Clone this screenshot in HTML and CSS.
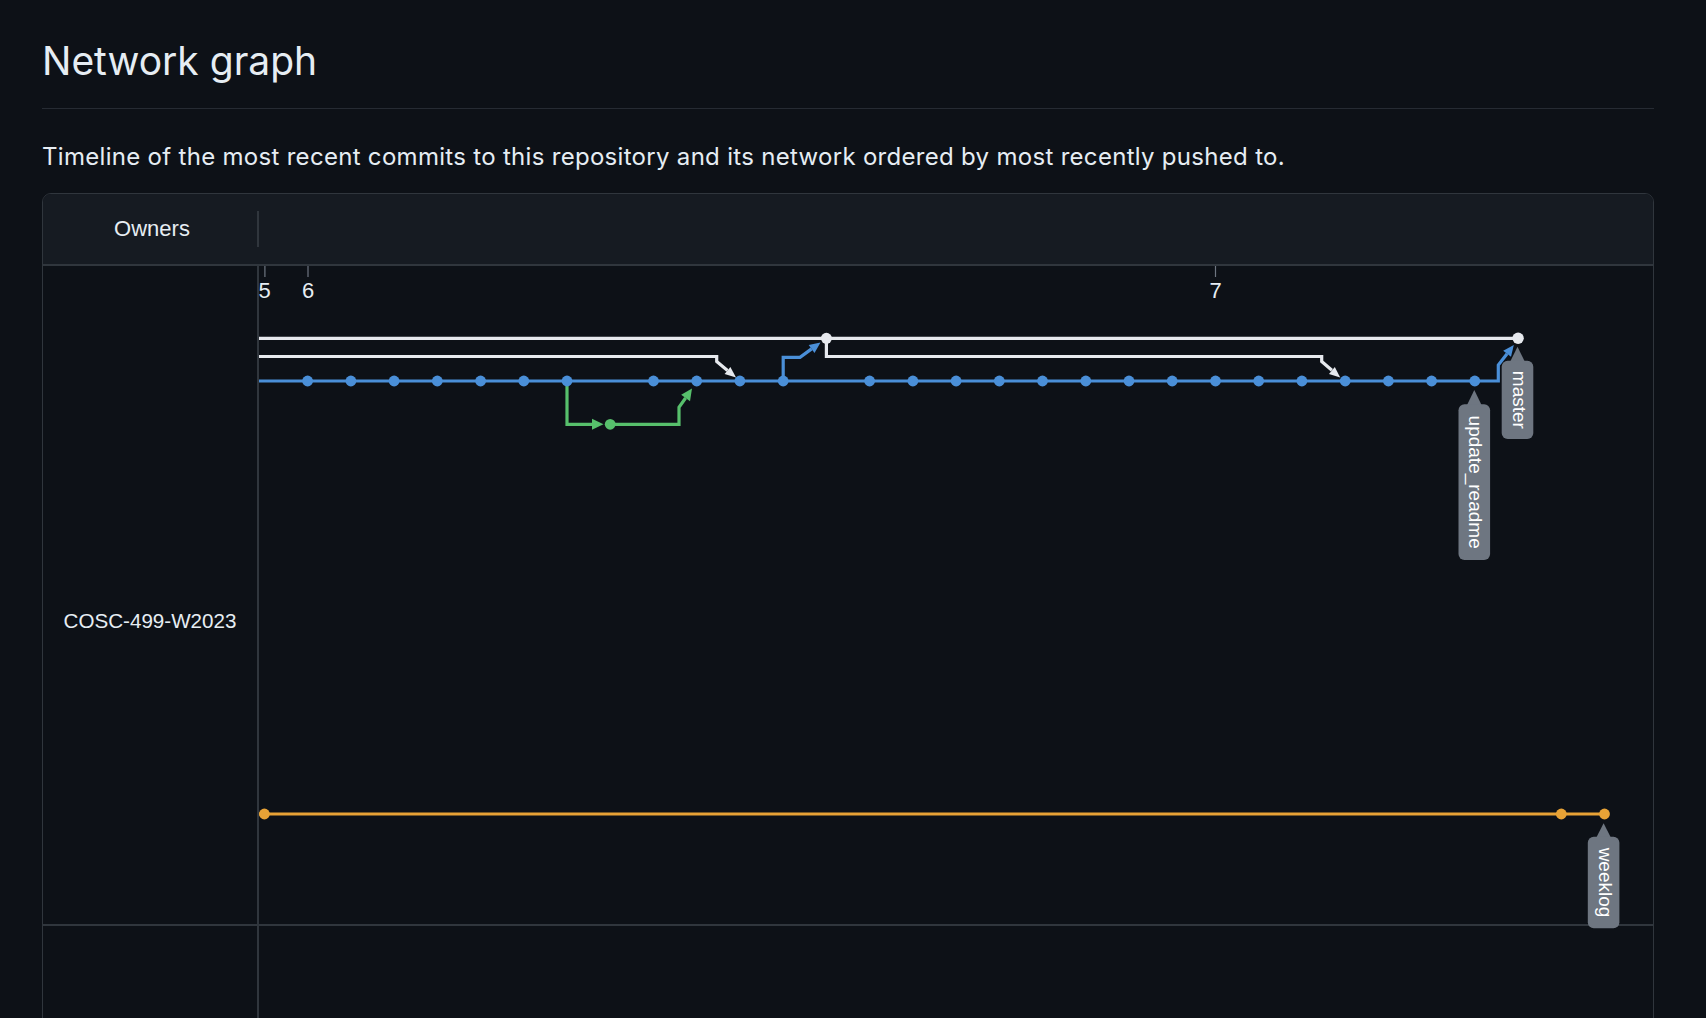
FILE: index.html
```html
<!DOCTYPE html>
<html lang="en">
<head>
<meta charset="utf-8">
<title>Network graph</title>
<link rel="stylesheet" href="styles.css">
</head>
<body>
<main class="page">
  <div class="subhead">
    <h2 class="subhead-heading">Network graph</h2>
  </div>
  <p class="lead">Timeline of the most recent commits to this repository and its network ordered by most recently pushed to.</p>
  <section class="network">
    <div class="net-head">
      <div class="owners-title">Owners</div>
      <div class="head-sep"></div>
      <div class="head-rest"></div>
    </div>
    <div class="net-row">
      <div class="owner-cell"><span class="owner-name">COSC-499-W2023</span></div>
      <div class="graph-cell">
        <svg class="graph" width="1394" height="658" viewBox="259 266 1394 658" xmlns="http://www.w3.org/2000/svg">
          <!-- date ticks -->
          <g class="ticks">
            <line x1="264.9" y1="266" x2="264.9" y2="277"/>
            <line x1="308" y1="266" x2="308" y2="277"/>
            <line x1="1215.5" y1="266" x2="1215.5" y2="277"/>
          </g>
          <g class="dates">
            <text x="264.5" y="298.3">5</text>
            <text x="308" y="298.3">6</text>
            <text x="1215.5" y="298.3">7</text>
          </g>

          <!-- white (master) -->
          <g class="c-white">
            <path class="ln" d="M259 338.3 H1518.1"/>
            <path class="ln" d="M259 356.5 H716.7 V361.5 L727.5 370.5"/>
            <polygon points="736,377.5 724.6,374 730.4,367"/>
            <path class="ln" d="M826.4 338.3 V356.5 H1321.7 V361.5 L1331.9 370.3"/>
            <polygon points="1340.2,377.5 1329,373.9 1334.8,366.9"/>
          </g>

          <!-- blue -->
          <g class="c-blue">
            <path class="ln" d="M259 381 H1498.3 V365 L1507.1 353.7"/>
            <polygon points="1513.8,345 1511,356.7 1503.2,350.7"/>
            <path class="ln" d="M783.2 381 V357.3 H800 L811.6 348.9"/>
            <polygon points="820.5,342.5 814.5,353 808.7,345"/>
          </g>

          <!-- green -->
          <g class="c-green">
            <path class="ln" d="M567 381 V424.3 H593"/>
            <polygon points="603.5,424.3 592,418.8 592,429.8"/>
            <path class="ln" d="M610.2 424.3 H679 V407.3 L685.6 398"/>
            <polygon points="692,388.5 690,401.2 681.2,394.8"/>
            <circle cx="610.2" cy="424.3" r="5.4"/>
          </g>

          <!-- orange -->
          <g class="c-orange">
            <path class="ln" d="M259 814 H1604.5"/>
            <circle cx="264.4" cy="814" r="5.4"/>
            <circle cx="1561.3" cy="814" r="5.4"/>
            <circle cx="1604.5" cy="814" r="5.4"/>
          </g>

          <!-- blue commits -->
          <g class="c-blue">
            <circle cx="307.6" cy="381" r="5.4"/>
            <circle cx="350.9" cy="381" r="5.4"/>
            <circle cx="394.1" cy="381" r="5.4"/>
            <circle cx="437.3" cy="381" r="5.4"/>
            <circle cx="480.6" cy="381" r="5.4"/>
            <circle cx="523.8" cy="381" r="5.4"/>
            <circle cx="567" cy="381" r="5.4"/>
            <circle cx="653.5" cy="381" r="5.4"/>
            <circle cx="696.7" cy="381" r="5.4"/>
            <circle cx="739.9" cy="381" r="5.4"/>
            <circle cx="783.2" cy="381" r="5.4"/>
            <circle cx="869.6" cy="381" r="5.4"/>
            <circle cx="912.9" cy="381" r="5.4"/>
            <circle cx="956.1" cy="381" r="5.4"/>
            <circle cx="999.3" cy="381" r="5.4"/>
            <circle cx="1042.5" cy="381" r="5.4"/>
            <circle cx="1085.8" cy="381" r="5.4"/>
            <circle cx="1129" cy="381" r="5.4"/>
            <circle cx="1172.2" cy="381" r="5.4"/>
            <circle cx="1215.5" cy="381" r="5.4"/>
            <circle cx="1258.7" cy="381" r="5.4"/>
            <circle cx="1301.9" cy="381" r="5.4"/>
            <circle cx="1345.2" cy="381" r="5.4"/>
            <circle cx="1388.4" cy="381" r="5.4"/>
            <circle cx="1431.6" cy="381" r="5.4"/>
            <circle cx="1474.8" cy="381" r="5.4"/>
          </g>

          <!-- white commits -->
          <g class="c-white">
            <circle cx="826.4" cy="338.3" r="5.5"/>
            <circle cx="1518.1" cy="338.3" r="5.7"/>
          </g>

          <!-- branch labels -->
          <g class="label" transform="translate(1517.5 0)">
            <polygon points="-7.5,362 0,346.7 7.5,362"/>
            <rect x="-15.8" y="360.7" width="31.6" height="78.3" rx="6"/>
            <text transform="translate(0 399.85) rotate(90)" x="0" y="5">master</text>
          </g>
          <g class="label" transform="translate(1474.3 0)">
            <polygon points="-7.5,405.5 0,390 7.5,405.5"/>
            <rect x="-15.8" y="404.3" width="31.6" height="155.7" rx="6"/>
            <text transform="translate(0 482.15) rotate(90)" x="0" y="5">update_readme</text>
          </g>
          <g class="label" transform="translate(1603.6 0)">
            <polygon points="-7.5,838 0,823.3 7.5,838"/>
            <rect x="-15.8" y="836.7" width="31.6" height="91.6" rx="6"/>
            <text transform="translate(0 882.5) rotate(90)" x="0" y="5">weeklog</text>
          </g>
        </svg>
      </div>
    </div>
    <div class="net-row net-row-next">
      <div class="owner-cell"></div>
      <div class="graph-cell"></div>
    </div>
  </section>
</main>
</body>
</html>
```

FILE: styles.css
```css
html, body {
  margin: 0;
  padding: 0;
  background: #0d1117;
  overflow: hidden;
}

body {
  color: #e6edf3;
  font-family: Inter, "Noto Sans", "Liberation Sans", sans-serif;
}

.page {
  margin-left: 42px;
  width: 1612px;
  padding-top: 36.4px;
}

.subhead {
  border-bottom: 1px solid #262b33;
  padding-bottom: 21.6px;
}

.subhead-heading {
  margin: 0;
  font-size: 39px;
  line-height: 50px;
  font-weight: 400;
  color: #e6edf3;
}

.lead {
  margin: 31px 0 19px;
  font-size: 24px;
  letter-spacing: 0.3px;
  line-height: 34.5px;
  color: #e6edf3;
}

.network {
  border: 1px solid #30363d;
  border-radius: 9px;
  background: #0d1117;
}

.net-head {
  display: flex;
  align-items: center;
  height: 70px;
  background: #161b22;
  border-bottom: 2px solid #30363d;
  border-radius: 8px 8px 0 0;
}

.owners-title {
  width: 210px;
  padding-left: 4px;
  text-align: center;
  font-family: "Liberation Sans", Arial, sans-serif;
  font-size: 22px;
  line-height: 24px;
  color: #e6edf3;
}

.head-sep {
  width: 2px;
  height: 36px;
  background: #30363d;
}

.head-rest {
  flex: 1;
}

.net-row {
  display: grid;
  grid-template-columns: 216px 1fr;
  height: 658px;
  border-bottom: 2px solid #30363d;
}

.net-row-next {
  height: 200px;
  border-bottom: none;
}

.owner-cell {
  border-right: 2px solid #30363d;
  text-align: center;
  padding-top: 343px;
  font-family: "Liberation Sans", Arial, sans-serif;
  font-size: 20.6px;
  line-height: 24px;
  color: #e6edf3;
}

.graph-cell {
  min-width: 0;
}

.graph {
  display: block;
  overflow: visible;
}

.ticks line {
  stroke: #6e7681;
  stroke-width: 1.2;
}

.dates text {
  font-family: "Liberation Sans", Arial, sans-serif;
  font-size: 22px;
  fill: #e6edf3;
  text-anchor: middle;
}

.ln {
  fill: none;
  stroke-width: 3.2;
  stroke-linejoin: miter;
}

.c-white .ln { stroke: #e6e9ee; }
.c-white polygon, .c-white circle { fill: #e6e9ee; }

.c-blue .ln { stroke: #4a8fd8; }
.c-blue polygon, .c-blue circle { fill: #4a8fd8; }

.c-green .ln { stroke: #57c06c; }
.c-green polygon, .c-green circle { fill: #57c06c; }

.c-orange .ln { stroke: #e7a236; }
.c-orange circle { fill: #e7a236; }

.label rect, .label polygon {
  fill: #6e7681;
}

.label text {
  font-family: "Liberation Sans", Arial, sans-serif;
  font-size: 19px;
  fill: #ffffff;
  text-anchor: middle;
}
```
